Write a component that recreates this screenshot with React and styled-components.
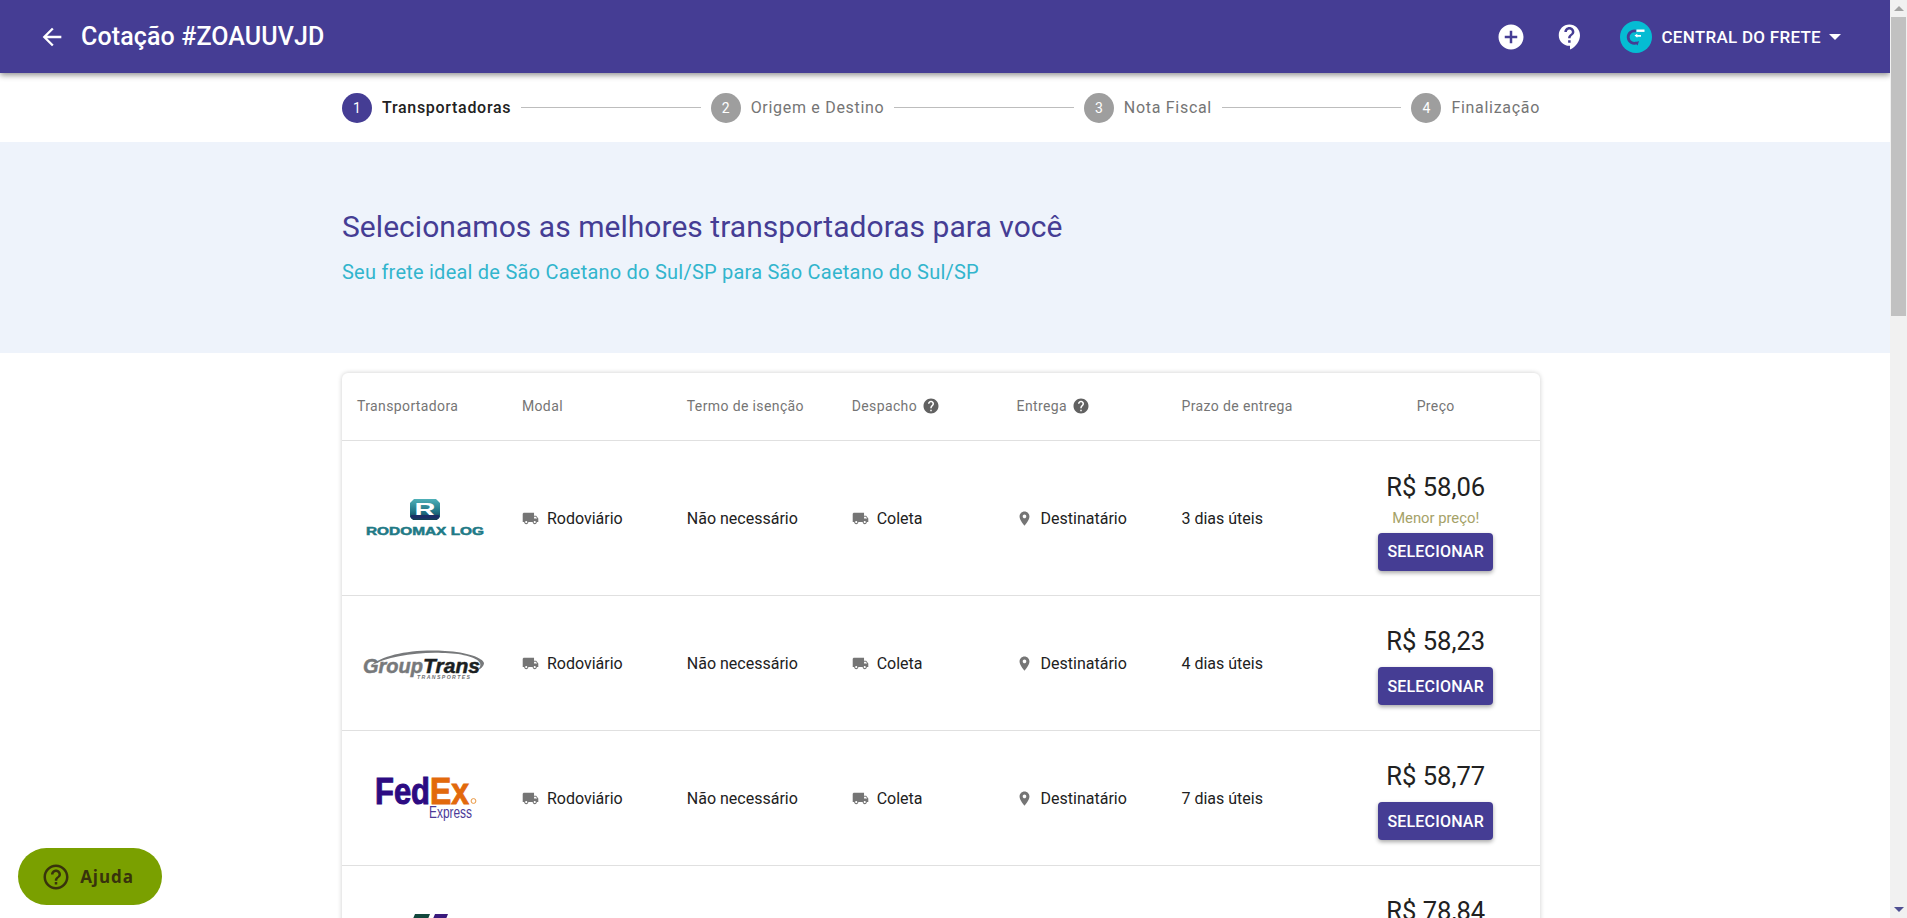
import React from 'react';
import styled, { createGlobalStyle } from 'styled-components';

const Global = createGlobalStyle`
  html, body { margin: 0; padding: 0; height: 100%; overflow: hidden; background: #fff; }
  body { font-family: Roboto, "Liberation Sans", sans-serif; color: #212121; }
  #root { height: 918px; }
`;

const Shell = styled.div`display: flex; width: 1907px; height: 918px; overflow: hidden;`;
const Page = styled.main`flex: 1; min-width: 0; height: 918px; overflow: hidden; position: relative;`;
const ScrollBar = styled.aside`width: 17px; background: #f1f1f1; display: flex; flex-direction: column; align-items: center; position: relative;`;
const ScrollCap = styled.div`height: 17px; width: 17px; display: flex; align-items: center; justify-content: center;`;
const ScrollThumb = styled.div`width: 15px; height: 299px; background: #c1c1c1;`;
const ScrollSpace = styled.div`flex: 1;`;
const TriUp = styled.div`width: 0; height: 0; border-left: 5px solid transparent; border-right: 5px solid transparent; border-bottom: 5px solid #a3a3a3;`;
const TriDown = styled.div`width: 0; height: 0; border-left: 5px solid transparent; border-right: 5px solid transparent; border-top: 5px solid #4f4f92;`;

const TopBar = styled.header`height: 73px; background: #453d94; color: #fff; display: flex; align-items: center; padding: 0 49px 0 38px; box-shadow: 0 2px 6px rgba(0,0,0,.45); position: relative; z-index: 2;`;
const BackIcon = styled.svg`width: 28px; height: 28px; fill: #fff; flex: none;`;
const Title = styled.h1`margin: 0 0 0 15px; font-size: 25px; font-weight: 500; letter-spacing: .12px; line-height: 1; flex: 1;`;
const BarIcon = styled.svg`width: 30px; height: 30px; fill: #fff; flex: none; margin-right: ${p => p.$gap}px;`;
const Avatar = styled.div`width: 32px; height: 32px; border-radius: 50%; background: #05bcd3; flex: none; display: flex; align-items: center; justify-content: center;`;
const Account = styled.span`margin-left: 9px; font-size: 17px; font-weight: 500; letter-spacing: .28px; text-transform: uppercase;`;
const Caret = styled.span`margin-left: 8px; width: 0; height: 0; border-left: 6px solid transparent; border-right: 6px solid transparent; border-top: 6px solid #fff;`;

const Steps = styled.nav`height: 69px; margin: 0 350px 0 342px; display: flex; align-items: center;`;
const StepDot = styled.span`width: 30px; height: 30px; border-radius: 50%; background: ${p => (p.$active ? '#453d94' : '#9e9e9e')}; color: #fff; font-size: 14px; display: flex; align-items: center; justify-content: center; flex: none;`;
const StepLabel = styled.span`margin-left: 10px; font-size: 16px; letter-spacing: .7px; white-space: nowrap; color: ${p => (p.$active ? '#212121' : '#757575')}; font-weight: ${p => (p.$active ? 500 : 400)};`;
const StepLine = styled.span`flex: 1; height: 1px; background: #bdbdbd; margin: 0 10px;`;

const Hero = styled.section`height: 211px; background: #eef3fb; padding: 0 0 2px 342px; box-sizing: border-box; display: flex; flex-direction: column; justify-content: center; gap: 16px;`;
const HeroTitle = styled.h2`margin: 0; font-size: 30px; font-weight: 400; color: #453d94; line-height: 34px; letter-spacing: .04px;`;
const HeroSub = styled.p`margin: 0; font-size: 20px; color: #32b5cd; line-height: 24px; letter-spacing: .23px;`;

const Card = styled.section`margin: 20px 350px 0 342px; border-radius: 6px; box-shadow: 0 0 5px rgba(0,0,0,.2);`;
const Row = styled.div`display: grid; grid-template-columns: repeat(6, 164.9px) 1fr; padding: 0 15px ${p => p.$foot || 0}px; align-items: center; height: ${p => p.$h}px; border-bottom: 1px solid #e0e0e0; box-sizing: border-box;`;
const Head = styled.div`font-size: 14px; letter-spacing: .38px; color: #757575; display: flex; align-items: center; gap: 5px; justify-content: ${p => (p.$center ? 'center' : 'flex-start')};`;
const HelpIcon = styled.svg`width: 18px; height: 18px; fill: #616161;`;
const Cell = styled.div`font-size: 16px; color: #212121; display: flex; align-items: center; gap: 8px;`;
const CellIcon = styled.svg`width: 17px; height: 17px; fill: #757575; flex: none;`;
const PinBox = styled.span`width: 17px; display: flex; justify-content: center; margin-left: -1px;`;
const LogoBox = styled.div`display: flex; justify-content: flex-start; padding-left: ${p => p.$pad}px;`;
const LogoSvg = styled.svg`display: block; flex: none; overflow: visible;`;
const PriceCell = styled.div`display: flex; flex-direction: column; align-items: center; justify-self: center; padding-top: ${p => p.$top}px;`;
const Price = styled.div`font-size: 25.6px; line-height: 28px; color: #212121;`;
const Best = styled.div`font-size: 14.8px; line-height: 20px; margin-top: 7px; color: #a5a268;`;
const Select = styled.button`margin-top: ${p => p.$gap}px; width: 115px; height: 38px; padding: 0; border: 0; border-radius: 4px; background: #453d94; color: #fff; font: 500 16px Roboto, sans-serif; letter-spacing: .2px; text-transform: uppercase; box-shadow: 0 2px 4px rgba(0,0,0,.35);`;

const HelpPill = styled.button`position: absolute; left: 18px; top: 848px; width: 144px; height: 57px; border: 0; border-radius: 29px; background: #7aa000; color: #38330c; display: flex; align-items: center; justify-content: center; gap: 9px; font: 700 17px "Open Sans", sans-serif; letter-spacing: .9px; padding: 0 5px 0 0; z-index: 3;`;
const PillIcon = styled.svg`width: 30px; height: 30px; fill: #38330c;`;

const P = {
  back: 'M20 11H7.83l5.59-5.59L12 4l-8 8 8 8 1.41-1.41L7.83 13H20v-2z',
  add: 'M12 2C6.48 2 2 6.48 2 12s4.48 10 10 10 10-4.48 10-10S17.52 2 12 2zm5 11h-4v4h-2v-4H7v-2h4V7h2v4h4v2z',
  support: 'M11.5 2C6.81 2 3 5.81 3 10.5S6.81 19 11.5 19h.5v3c4.86-2.34 8-7 8-11.5C20 5.81 16.19 2 11.5 2zm1 14.5h-2v-2h2v2zm0-3.5h-2c0-3.25 3-3 3-5 0-1.1-.9-2-2-2s-2 .9-2 2h-2c0-2.21 1.79-4 4-4s4 1.79 4 4c0 2.5-3 2.75-3 5z',
  help: 'M12 2C6.48 2 2 6.48 2 12s4.48 10 10 10 10-4.48 10-10S17.52 2 12 2zm1 17h-2v-2h2v2zm2.07-7.75l-.9.92C13.45 12.9 13 13.5 13 15h-2v-.5c0-1.1.45-2.1 1.17-2.83l1.24-1.26c.37-.36.59-.86.59-1.41 0-1.1-.9-2-2-2s-2 .9-2 2H8c0-2.21 1.79-4 4-4s4 1.79 4 4c0 .88-.36 1.68-.93 2.25z',
  helpOutline: 'M11 18h2v-2h-2v2zm1-16C6.48 2 2 6.48 2 12s4.48 10 10 10 10-4.48 10-10S17.52 2 12 2zm0 18c-4.41 0-8-3.59-8-8s3.59-8 8-8 8 3.59 8 8-3.59 8-8 8zm0-14c-2.21 0-4 1.79-4 4h2c0-1.1.9-2 2-2s2 .9 2 2c0 2-3 1.75-3 5h2c0-2.25 3-2.5 3-5 0-2.21-1.79-4-4-4z',
  truck: 'M20 8h-3V4H3c-1.1 0-2 .9-2 2v11h2c0 1.66 1.34 3 3 3s3-1.34 3-3h6c0 1.66 1.34 3 3 3s3-1.34 3-3h2v-5l-3-4zM6 18.5c-.83 0-1.5-.67-1.5-1.5s.67-1.5 1.5-1.5 1.5.67 1.5 1.5-.67 1.5-1.5 1.5zm13.5-9l1.96 2.5H17V9.5h2.5zm-1.5 9c-.83 0-1.5-.67-1.5-1.5s.67-1.5 1.5-1.5 1.5.67 1.5 1.5-.67 1.5-1.5 1.5z',
  pin: 'M12 2C8.13 2 5 5.13 5 9c0 5.25 7 13 7 13s7-7.75 7-13c0-3.87-3.13-7-7-7zm0 9.5c-1.38 0-2.5-1.12-2.5-2.5s1.12-2.5 2.5-2.5 2.5 1.12 2.5 2.5-1.12 2.5-2.5 2.5z',
};

const AccountMark = () => (
  <svg width="28" height="28" viewBox="0 0 28 28">
    <path d="M14 8.2a6.2 6.2 0 1 0 1 11.6" fill="none" stroke="#453d94" strokeWidth="2.8" />
    <path d="M17 18l-4 1.6 2.6 3z" fill="#453d94" />
    <rect x="14.5" y="6.5" width="8" height="2.4" fill="#fff" />
    <path d="M12.5 12.6l2.8-1.8v1.1h3.7v1.8h-3.7v1.1z" fill="#fff" />
  </svg>
);

const RodomaxLogo = () => (
  <LogoSvg width="120" height="38" viewBox="0 0 120 38">
    <defs>
      <linearGradient id="rdx" x1="0" y1="0" x2="0" y2="1">
        <stop offset="0" stopColor="#4fb0b8" />
        <stop offset=".6" stopColor="#1f7284" />
        <stop offset="1" stopColor="#123a52" />
      </linearGradient>
    </defs>
    <path d="M49 0h22l4 4v14l-3 3H48l-3-3V4z" fill="url(#rdx)" />
    <text x="60" y="17" textAnchor="middle" fontFamily="Liberation Sans" fontWeight="700" fontSize="19" textLength="21" lengthAdjust="spacingAndGlyphs" fill="#fff">R</text>
    <rect x="46" y="16" width="28" height="3.5" fill="#1a2f66" />
    <text x="60" y="36" textAnchor="middle" fontFamily="Liberation Sans" fontWeight="700" fontSize="11" textLength="118" lengthAdjust="spacingAndGlyphs" stroke="#1f7a86" strokeWidth=".5" fill="#1f7a86">RODOMAX LOG</text>
  </LogoSvg>
);

const GroupLogo = () => (
  <LogoSvg width="122" height="34" viewBox="0 0 122 34">
    <path d="M7 20C20 9 48 3 82 5c22 1 38 7 39 12 0 3-3 6-8 8 4-3 5-5 4-8-3-6-20-10-38-10C52 6 24 11 7 20z" fill="#77797b" />
    <text x="0" y="27" fontFamily="Liberation Sans" fontWeight="700" fontStyle="italic" fontSize="21" stroke="#77797b" strokeWidth=".5" fill="#77797b" textLength="60" lengthAdjust="spacingAndGlyphs">Group</text>
    <text x="60" y="27" fontFamily="Liberation Sans" fontWeight="700" fontStyle="italic" fontSize="21" stroke="#1b1f22" strokeWidth=".5" fill="#1b1f22" textLength="57" lengthAdjust="spacingAndGlyphs">Trans</text>
    <text x="54" y="33" fontFamily="Liberation Sans" fontWeight="700" fontStyle="italic" fontSize="5.2" textLength="53" fill="#6f7173">TRANSPORTES</text>
  </LogoSvg>
);

const FedexLogo = () => (
  <LogoSvg width="102" height="46" viewBox="0 0 102 46">
    <text x="0" y="28.5" fontFamily="Liberation Sans" fontWeight="700" fontSize="37" textLength="55" lengthAdjust="spacingAndGlyphs" stroke="#2d0b82" strokeWidth="1" fill="#2d0b82">Fed</text>
    <text x="55" y="28.5" fontFamily="Liberation Sans" fontWeight="700" fontSize="37" textLength="39" lengthAdjust="spacingAndGlyphs" stroke="#e2690c" strokeWidth="1" fill="#e2690c">Ex</text>
    <circle cx="98.5" cy="26" r="2.4" fill="none" stroke="#e9963f" strokeWidth="1" />
    <text x="54" y="43" fontFamily="Liberation Sans" fontSize="16" textLength="43" lengthAdjust="spacingAndGlyphs" fill="#4c3a97">Express</text>
  </LogoSvg>
);

const CutLogo = () => (
  <LogoSvg width="80" height="38" viewBox="0 0 80 38">
    <path d="M0 12L5 0h15l-2 5H11l-1 2h8l-3 5z" fill="#12473c" />
    <path d="M20 12l5-12h13l-2 5h-6l-1 2h6l-3 5z" fill="#3a1a7c" />
  </LogoSvg>
);

const Step = ({ n, label, active }) => (
  <>
    <StepDot $active={active}>{n}</StepDot>
    <StepLabel $active={active}>{label}</StepLabel>
  </>
);

const Svg = ({ as: C, d, ...rest }) => <C viewBox="0 0 24 24" {...rest}><path d={d} /></C>;

const rows = [
  { logo: <RodomaxLogo />, pad: 8, h: 155, days: '3 dias úteis', price: 'R$ 58,06', best: true },
  { logo: <GroupLogo />, pad: 6, h: 135, days: '4 dias úteis', price: 'R$ 58,23' },
  { logo: <FedexLogo />, pad: 18, h: 135, days: '7 dias úteis', price: 'R$ 58,77' },
  { logo: <CutLogo />, pad: 53, h: 135, days: '5 dias úteis', price: 'R$ 78,84' },
];

export default function App() {
  return (
    <Shell>
      <Global />
      <Page>
        <TopBar>
          <Svg as={BackIcon} d={P.back} />
          <Title>Cotação #ZOAUUVJD</Title>
          <Svg as={BarIcon} $gap={29} d={P.add} />
          <Svg as={BarIcon} $gap={35} d={P.support} />
          <Avatar><AccountMark /></Avatar>
          <Account>Central do Frete</Account>
          <Caret />
        </TopBar>
        <Steps>
          <Step n="1" label="Transportadoras" active />
          <StepLine />
          <Step n="2" label="Origem e Destino" />
          <StepLine />
          <Step n="3" label="Nota Fiscal" />
          <StepLine />
          <Step n="4" label="Finalização" />
        </Steps>
        <Hero>
          <HeroTitle>Selecionamos as melhores transportadoras para você</HeroTitle>
          <HeroSub>Seu frete ideal de São Caetano do Sul/SP para São Caetano do Sul/SP</HeroSub>
        </Hero>
        <Card>
          <Row $h={68} $foot={2}>
            <Head>Transportadora</Head>
            <Head>Modal</Head>
            <Head>Termo de isenção</Head>
            <Head>Despacho <Svg as={HelpIcon} d={P.help} /></Head>
            <Head>Entrega <Svg as={HelpIcon} d={P.help} /></Head>
            <Head>Prazo de entrega</Head>
            <Head $center>Preço</Head>
          </Row>
          {rows.map(r => (
            <Row $h={r.h} key={r.price}>
              <LogoBox $pad={r.pad}>{r.logo}</LogoBox>
              <Cell><Svg as={CellIcon} d={P.truck} />Rodoviário</Cell>
              <Cell>Não necessário</Cell>
              <Cell><Svg as={CellIcon} d={P.truck} />Coleta</Cell>
              <Cell><PinBox><Svg as={CellIcon} d={P.pin} /></PinBox>Destinatário</Cell>
              <Cell>{r.days}</Cell>
              <PriceCell $top={r.best ? 7 : 6}>
                <Price>{r.price}</Price>
                {r.best && <Best>Menor preço!</Best>}
                <Select $gap={r.best ? 5 : 12}>Selecionar</Select>
              </PriceCell>
            </Row>
          ))}
        </Card>
        <HelpPill><Svg as={PillIcon} d={P.helpOutline} />Ajuda</HelpPill>
      </Page>
      <ScrollBar>
        <ScrollCap><TriUp /></ScrollCap>
        <ScrollThumb />
        <ScrollSpace />
        <ScrollCap><TriDown /></ScrollCap>
      </ScrollBar>
    </Shell>
  );
}
